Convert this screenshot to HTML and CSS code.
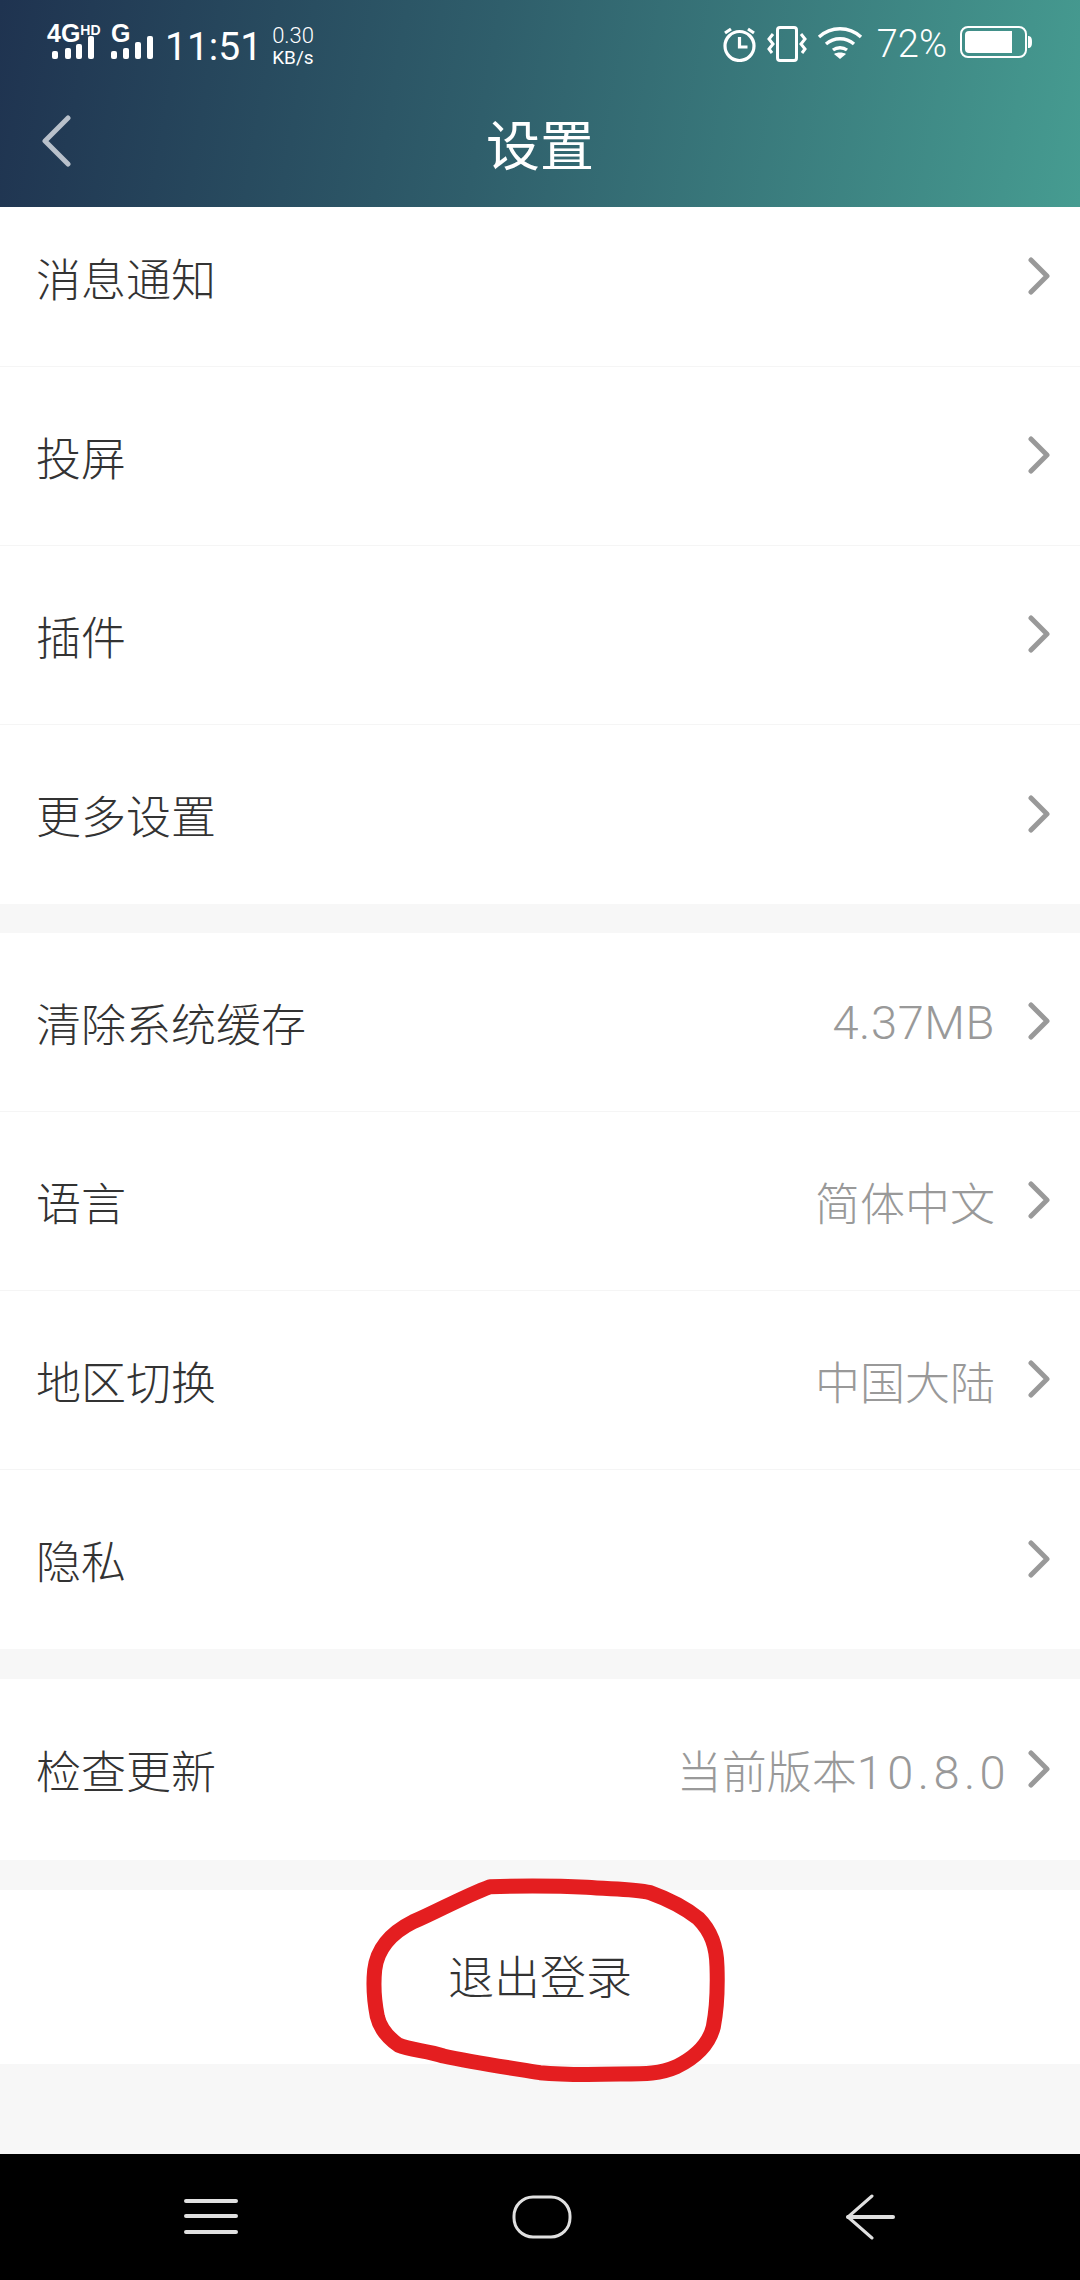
FILE: index.html
```html
<!DOCTYPE html>
<html lang="zh-CN">
<head>
    <meta charset="UTF-8">
    <title>设置</title>
    <link rel="stylesheet" href="styles.css">
</head>
<body>
<div class="page">
    <header class="top">
        <div class="status">
            <div class="status-left">
                <div class="signal">
                    <span class="net">4G<sup>HD</sup></span>
                    <svg width="42" height="23" viewBox="0 0 42 23"><rect x="0" y="15" width="6" height="8" rx="2"/><rect x="13" y="12" width="6" height="11" rx="2"/><rect x="24" y="8" width="6" height="15" rx="2"/><rect x="36" y="0" width="6" height="23" rx="2"/></svg>
                </div>
                <div class="signal signal-g">
                    <span class="net">G</span>
                    <svg width="42" height="23" viewBox="0 0 42 23"><rect x="0" y="15" width="6" height="8" rx="2"/><rect x="12" y="12" width="6" height="11" rx="2"/><rect x="24" y="6" width="6" height="17" rx="2"/><rect x="36" y="0" width="6" height="23" rx="2"/></svg>
                </div>
                <span class="clock">11:51</span>
                <span class="speed">0.30<br><small>KB/s</small></span>
            </div>
            <div class="status-right">
                <svg width="35" height="36" viewBox="0 0 35 36" fill="none" stroke="#fff" stroke-width="3.2"><circle cx="17.5" cy="20" r="14.5"/><path d="M17.5 11v10h8"/><path d="M3 7l6-4M32 7l-6-4"/></svg>
                <svg width="40" height="36" viewBox="0 0 40 36" fill="none" stroke="#fff" stroke-width="3"><rect x="10.5" y="1.5" width="19" height="33" rx="2.5"/><path d="M6 8l-4 5 4 5-4 5 3 4M34 8l4 5-4 5 4 5-3 4"/></svg>
                <svg width="46" height="33" viewBox="0 0 46 33" fill="none" stroke="#fff" stroke-width="3.4"><path d="M2 11c12-11 30-11 42 0"/><path d="M9 18c8-7 20-7 28 0"/><path d="M16 24c4-3 10-3 14 0"/><path d="M23 33l-6-5c3-2 9-2 12 0z" fill="#fff" stroke="none"/></svg>
                <span class="pct">72%</span>
                <svg width="72" height="32" viewBox="0 0 72 32"><rect x="1" y="1" width="65" height="30" rx="7" fill="none" stroke="#fff" stroke-width="2"/><path d="M5 9a4 4 0 0 1 4-4h43v22h-43a4 4 0 0 1-4-4z" fill="#fff"/><path d="M68 10c3 0 4 2 4 6s-1 6-4 6z" fill="#fff"/></svg>
            </div>
        </div>
        <div class="titlebar">
            <svg class="back" width="30" height="52" viewBox="0 0 30 52" fill="none" stroke="#b9c1cb" stroke-width="5" stroke-linecap="round" stroke-linejoin="round"><path d="M27 3L4 26l23 23"/></svg>
            <h1>设置</h1>
        </div>
    </header>

    <section class="group">
        <div class="row row-first"><span class="label">消息通知</span><svg class="arrow" width="22" height="38" viewBox="0 0 22 38"><path d="M3 3l16 16L3 35"/></svg></div>
        <div class="row"><span class="label">投屏</span><svg class="arrow" width="22" height="38" viewBox="0 0 22 38"><path d="M3 3l16 16L3 35"/></svg></div>
        <div class="row"><span class="label">插件</span><svg class="arrow" width="22" height="38" viewBox="0 0 22 38"><path d="M3 3l16 16L3 35"/></svg></div>
        <div class="row"><span class="label">更多设置</span><svg class="arrow" width="22" height="38" viewBox="0 0 22 38"><path d="M3 3l16 16L3 35"/></svg></div>
    </section>

    <section class="group">
        <div class="row"><span class="label">清除系统缓存</span><span class="value num">4.37MB</span><svg class="arrow" width="22" height="38" viewBox="0 0 22 38"><path d="M3 3l16 16L3 35"/></svg></div>
        <div class="row"><span class="label">语言</span><span class="value">简体中文</span><svg class="arrow" width="22" height="38" viewBox="0 0 22 38"><path d="M3 3l16 16L3 35"/></svg></div>
        <div class="row"><span class="label">地区切换</span><span class="value">中国大陆</span><svg class="arrow" width="22" height="38" viewBox="0 0 22 38"><path d="M3 3l16 16L3 35"/></svg></div>
        <div class="row"><span class="label">隐私</span><svg class="arrow" width="22" height="38" viewBox="0 0 22 38"><path d="M3 3l16 16L3 35"/></svg></div>
    </section>

    <section class="group">
        <div class="row row-update"><span class="label">检查更新</span><span class="value value-version">当前版本<span class="num num-spaced">10.8.0</span></span><svg class="arrow" width="22" height="38" viewBox="0 0 22 38"><path d="M3 3l16 16L3 35"/></svg></div>
    </section>

    <section class="group logout">
        <span>退出登录</span>
        <svg class="ring" width="480" height="260" viewBox="0 0 1440 780" fill="none" stroke="#e41e20" stroke-width="45" stroke-linejoin="round"><path d="M570 140C650 138 780 138 860 142C930 148 1000 146 1050 158C1100 176 1150 200 1195 235C1235 275 1250 320 1251 380C1253 440 1252 500 1240 560C1228 610 1190 650 1130 680C1080 702 1040 702 960 702C880 704 800 706 720 698C620 682 520 668 430 648C380 632 330 630 295 615C260 590 240 565 232 530C222 480 220 430 224 390C232 320 280 275 340 245C420 210 490 170 570 140Z"/></svg>
    </section>

    <div class="spacer"></div>

    <nav class="navbar">
        <svg width="54" height="36" viewBox="0 0 54 36" stroke="#e0e0e0" stroke-width="4" stroke-linecap="round"><path d="M2 2h50M2 17h50M2 33h50"/></svg>
        <svg width="60" height="44" viewBox="0 0 60 44" fill="none" stroke="#e0e0e0" stroke-width="3"><rect x="2" y="2" width="56" height="40" rx="19"/></svg>
        <svg width="50" height="46" viewBox="0 0 50 46" fill="none" stroke="#e0e0e0" stroke-width="3" stroke-linecap="round" stroke-linejoin="round"><path d="M27 2L3 23l24 21"/><path d="M3 23h45" stroke-width="4"/></svg>
    </nav>
</div>
</body>
</html>
```

FILE: styles.css
```css
* { box-sizing: border-box; }
html, body { margin: 0; padding: 0; }
body { font-family: "Noto Sans CJK SC", "Noto Sans", sans-serif; background: #f7f7f7; color: #333; }
.page { width: 1080px; height: 2280px; display: flex; flex-direction: column; overflow: hidden; }

.top { height: 207px; background: linear-gradient(100deg, #1f3350 0%, #2f5e6b 45%, #469c91 100%); color: #fff; }
.status { height: 84px; display: flex; justify-content: space-between; padding: 24px 48px 0 47px; }
.status-left, .status-right { display: flex; align-items: flex-start; }
.status-right { padding-top: 2px; gap: 10px; }
.status-right svg { display: block; }
.signal { display: flex; flex-direction: column; width: 52px; margin-right: 12px; }
.signal svg { fill: #fff; display: block; margin: -6px 0 0 5px; }
.signal-g { width: 44px; margin-right: 10px; }
.signal-g svg { margin-left: 0; }
.net { font-family: "Liberation Sans", sans-serif; font-weight: 700; font-size: 25px; line-height: 18px; height: 18px; white-space: nowrap; }
.net sup { font-size: 14px; line-height: 0; vertical-align: 7px; }
.clock { font-family: Roboto, sans-serif; font-weight: 400; font-size: 39px; line-height: 40px; margin-top: 3px; }
.speed { font-family: Roboto, sans-serif; font-weight: 300; font-size: 22px; line-height: 21px; margin: 1px 0 0 10px; }
.speed small { font-size: 19px; font-weight: 400; }
.pct { font-family: Roboto, sans-serif; font-weight: 300; font-size: 38px; line-height: 36px; margin-left: 4px; margin-right: 3px; }

.titlebar { position: relative; height: 123px; display: flex; align-items: center; justify-content: center; padding-bottom: 6px; }
.titlebar h1 { margin: 0; font-weight: 400; font-size: 54px; line-height: 60px; }
.back { position: absolute; left: 41px; top: 31px; }

.group { background: #fff; margin-bottom: 30px; }
.group:first-of-type { margin-bottom: 29px; }
.row { height: 179px; padding: 0 30px 0 36px; display: flex; align-items: center; border-bottom: 1px solid #f5f5f5; }
.row:last-child { border-bottom: 0; }
.row-first { height: 160px; padding-bottom: 19px; }
.row-update { height: 181px; }
.label { flex: 1; font-size: 45px; font-weight: 300; color: #333; }
.value { font-size: 45px; font-weight: 300; color: #999; font-family: Roboto, "Noto Sans CJK SC", sans-serif; margin-right: 33px; }
.value-version { margin-right: 18px; }
.num { font-size: 47px; font-weight: 300; letter-spacing: 0.6px; }
.num-spaced { letter-spacing: 4.4px; }
.arrow { fill: none; stroke: #999; stroke-width: 5; stroke-linecap: round; stroke-linejoin: round; margin-bottom: 2px; }

.logout { position: relative; height: 174px; margin: 0; padding-bottom: 6px; display: flex; align-items: center; justify-content: center; font-size: 46px; font-weight: 300; }
.ring { position: absolute; left: 300px; top: -50px; }

.spacer { flex: 1; }
.navbar { height: 126px; background: #000; display: flex; justify-content: space-between; align-items: center; padding: 0 185px 0 184px; }
```
